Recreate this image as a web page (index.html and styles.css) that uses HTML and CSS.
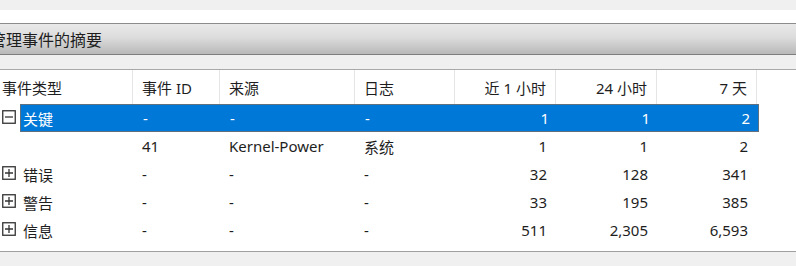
FILE: index.html
```html
<!DOCTYPE html>
<html lang="zh-CN">
<head>
    <meta charset="UTF-8">
    <title>管理事件的摘要</title>
    <link rel="stylesheet" href="styles.css">
</head>
<body>

<div class="top-strip"></div>

<div class="panel">
    <div class="panel-title"><span>管理事件的摘要</span></div>
    <div class="panel-gap"></div>

    <div class="summary">
        <div class="row head">
            <div class="cell first">事件类型</div>
            <div class="cell">事件 ID</div>
            <div class="cell">来源</div>
            <div class="cell">日志</div>
            <div class="cell num">近 1 小时</div>
            <div class="cell num">24 小时</div>
            <div class="cell num">7 天</div>
        </div>

        <div class="item">
            <div class="toggle">
                <svg width="14" height="14" viewBox="0 0 14 14"><rect x="0.75" y="0.75" width="12.5" height="12.5" fill="none" stroke="#333" stroke-width="1.3"/><path d="M3 7h8" stroke="#333" stroke-width="1.3"/></svg>
            </div>
            <div class="cells selected">
                <div class="cell label">关键</div>
                <div class="cell">-</div>
                <div class="cell">-</div>
                <div class="cell">-</div>
                <div class="cell num">1</div>
                <div class="cell num">1</div>
                <div class="cell num">2</div>
            </div>
        </div>

        <div class="item">
            <div class="toggle"></div>
            <div class="cells">
                <div class="cell label"></div>
                <div class="cell">41</div>
                <div class="cell">Kernel-Power</div>
                <div class="cell">系统</div>
                <div class="cell num">1</div>
                <div class="cell num">1</div>
                <div class="cell num">2</div>
            </div>
        </div>

        <div class="item">
            <div class="toggle">
                <svg width="14" height="14" viewBox="0 0 14 14"><rect x="0.75" y="0.75" width="12.5" height="12.5" fill="none" stroke="#333" stroke-width="1.3"/><path d="M3 7h8M7 3v8" stroke="#333" stroke-width="1.3"/></svg>
            </div>
            <div class="cells">
                <div class="cell label">错误</div>
                <div class="cell">-</div>
                <div class="cell">-</div>
                <div class="cell">-</div>
                <div class="cell num">32</div>
                <div class="cell num">128</div>
                <div class="cell num">341</div>
            </div>
        </div>

        <div class="item">
            <div class="toggle">
                <svg width="14" height="14" viewBox="0 0 14 14"><rect x="0.75" y="0.75" width="12.5" height="12.5" fill="none" stroke="#333" stroke-width="1.3"/><path d="M3 7h8M7 3v8" stroke="#333" stroke-width="1.3"/></svg>
            </div>
            <div class="cells">
                <div class="cell label">警告</div>
                <div class="cell">-</div>
                <div class="cell">-</div>
                <div class="cell">-</div>
                <div class="cell num">33</div>
                <div class="cell num">195</div>
                <div class="cell num">385</div>
            </div>
        </div>

        <div class="item">
            <div class="toggle">
                <svg width="14" height="14" viewBox="0 0 14 14"><rect x="0.75" y="0.75" width="12.5" height="12.5" fill="none" stroke="#333" stroke-width="1.3"/><path d="M3 7h8M7 3v8" stroke="#333" stroke-width="1.3"/></svg>
            </div>
            <div class="cells">
                <div class="cell label">信息</div>
                <div class="cell">-</div>
                <div class="cell">-</div>
                <div class="cell">-</div>
                <div class="cell num">511</div>
                <div class="cell num">2,305</div>
                <div class="cell num">6,593</div>
            </div>
        </div>
    </div>

    <div class="bottom-strip"></div>
</div>

</body>
</html>
```

FILE: styles.css
```css
:root {
    --text: #1e1e1e;
    --line: #e5e5e5;
    --strip: #f0f0f0;
    --select: #0078d7;
}
body {
    margin: 0;
    background: #fff;
    color: var(--text);
    font-family: "Noto Sans", "Noto Sans CJK SC", sans-serif;
    font-size: 15px;
    overflow: hidden;
}
.top-strip {
    height: 10px;
    background: var(--strip);
}
.panel { margin-top: 13px; }
.panel-title {
    height: 30px;
    border-top: 1px solid #8c8c8c;
    border-bottom: 1px solid #7e7e7e;
    background: linear-gradient(#e9e9e9, #dcdcdc 45%, #b9b9b9);
    display: flex;
    align-items: center;
    font-size: 16px;
    overflow: hidden;
}
.panel-title span {
    margin-left: -10px;
    white-space: nowrap;
}
.panel-gap {
    height: 14px;
    background: var(--strip);
    border-bottom: 1px solid #a9a9a9;
}
.summary { padding-bottom: 7px; }
.row, .cells {
    display: grid;
    grid-template-columns: 133px 87px 135px 100px 101px 101px 100px;
}
.row.head { height: 34px; }
.row.head .cell {
    border-right: 1px solid var(--line);
    padding-left: 9px;
}
.row.head .cell.first { padding-left: 2px; }
.row.head .cell.num { padding-left: 0; }
.cell {
    display: flex;
    align-items: center;
    padding: 0 9px;
    white-space: nowrap;
    overflow: hidden;
}
.cell.num { justify-content: flex-end; }
.item {
    display: flex;
    height: 28px;
}
.toggle {
    width: 20px;
    display: flex;
    align-items: center;
    padding: 0 0 2px 2px;
    box-sizing: border-box;
}
.item .cells { grid-template-columns: 113px 87px 135px 100px 101px 101px 100px; }
.item .cell.label { padding-left: 3px; }
.cells.selected {
    background: var(--select);
    color: #fff;
    border: 1px solid #5f7080;
    box-sizing: border-box;
}
.cells.selected .cell.label { padding-left: 2px; }
.cells.selected .cell.num { padding-right: 8px; }
.bottom-strip {
    height: 14px;
    border-top: 1px solid #a0a0a0;
    background: var(--strip);
}
```
